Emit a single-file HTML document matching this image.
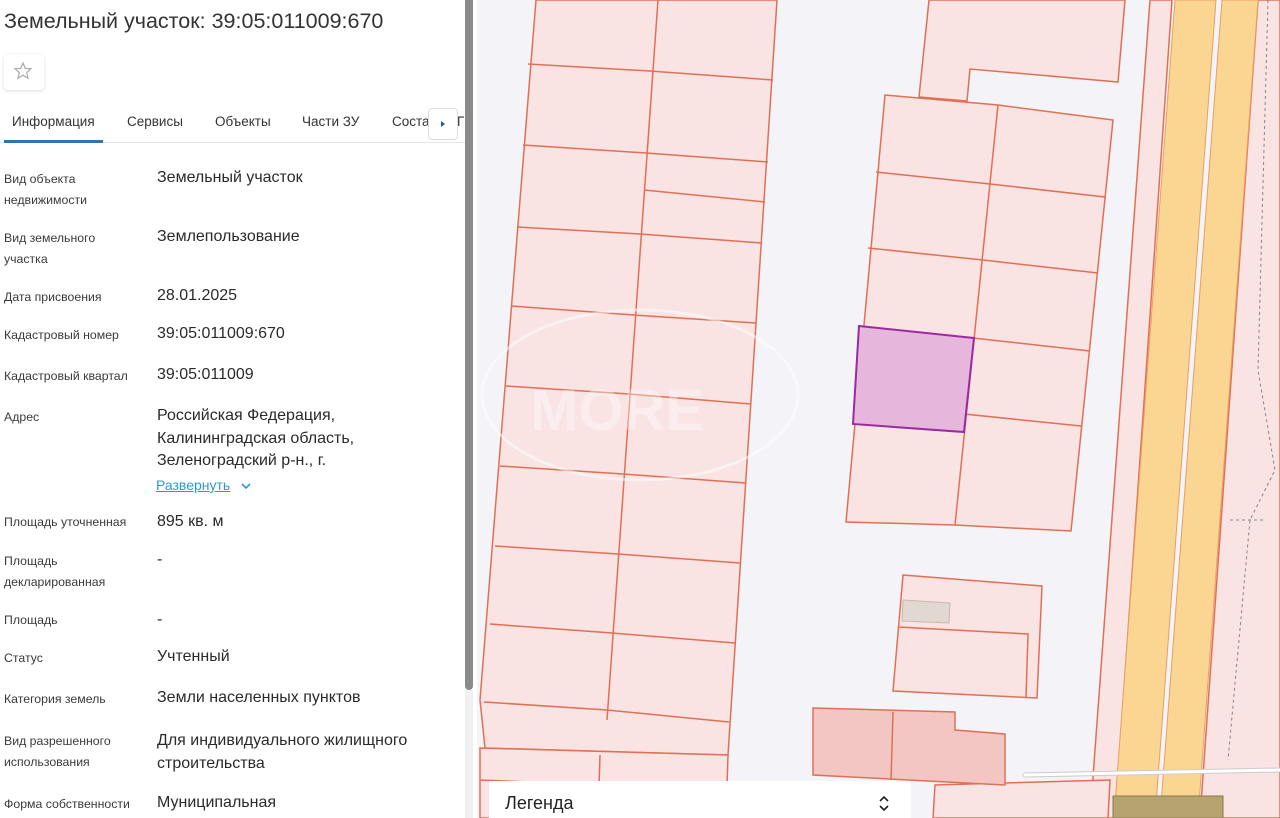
<!DOCTYPE html>
<html><head><meta charset="utf-8">
<style>
*{margin:0;padding:0;box-sizing:border-box}
body{width:1280px;height:818px;overflow:hidden;position:relative;background:#f4f4f8;font-family:"Liberation Sans",sans-serif}
#map{position:absolute;left:0;top:0}
#panel{position:absolute;left:0;top:0;width:477px;height:818px;background:#fff}
.t{position:absolute;white-space:nowrap}
.lb{position:absolute;left:4px;font-size:12.3px;color:#3a3a3a;line-height:21px}
.v{position:absolute;left:157px;font-size:16px;color:#2a2a2a;line-height:22.5px;white-space:nowrap}
.tab{position:absolute;top:114px;font-size:13.5px;color:#333}
</style></head><body>
<svg id="map" width="1280" height="818" viewBox="0 0 1280 818">
<rect x="0" y="0" width="1280" height="818" fill="#f3f3f8"/>
<g fill="#f9e3e3" stroke="#e07055" stroke-width="1.5">
<polygon points="536,0 777,0 728,755 485,748 480,700"/>
<polygon points="480,748 728,755 726,818 480,818"/>
<line x1="658" y1="0" x2="607" y2="720"/>
<line x1="600" y1="755" x2="598" y2="818"/>
<line x1="528" y1="64" x2="650" y2="71"/><line x1="650" y1="71" x2="773" y2="80"/>
<line x1="523" y1="145" x2="646" y2="153"/><line x1="646" y1="153" x2="768" y2="162"/>
<line x1="644" y1="190" x2="765" y2="202"/>
<line x1="517" y1="227" x2="640" y2="234"/><line x1="640" y1="234" x2="762" y2="243"/>
<line x1="511" y1="306" x2="634" y2="315"/><line x1="634" y1="315" x2="756" y2="323"/>
<line x1="506" y1="386" x2="629" y2="394"/><line x1="629" y1="394" x2="751" y2="404"/>
<line x1="500" y1="466" x2="623" y2="474"/><line x1="623" y1="474" x2="746" y2="483"/>
<line x1="495" y1="546" x2="618" y2="554"/><line x1="618" y1="554" x2="740" y2="563"/>
<line x1="490" y1="624" x2="612" y2="633"/><line x1="612" y1="633" x2="735" y2="643"/>
<line x1="484" y1="702" x2="607" y2="710"/><line x1="607" y1="710" x2="729" y2="722"/>
<line x1="480" y1="780" x2="728" y2="790"/>
<polygon points="929,0 1125,0 1118,82 970,69 967,101 919,97"/>
<polygon points="885,95 998,105 1113,120 1071,531 955,525 846,522"/>
<line x1="998" y1="105" x2="955" y2="525"/>
<line x1="876" y1="172" x2="990" y2="184"/><line x1="990" y1="184" x2="1105" y2="197"/>
<line x1="868" y1="248" x2="983" y2="260"/><line x1="983" y1="260" x2="1098" y2="273"/>
<line x1="973" y1="338" x2="1090" y2="351"/>
<line x1="853" y1="423" x2="964" y2="432"/><line x1="964" y1="414" x2="1081" y2="426"/>
<polygon points="903,575 1042,586 1037,698 893,691"/>
<polyline fill="none" points="898,627 1028,634 1026,697"/>
<polygon points="1150,0 1172,0 1115,818 1090,818"/>
<polygon points="1258,0 1280,0 1280,818 1200,818"/>
<polygon points="935,785 1110,780 1108,818 933,818"/>
</g>
<polygon points="903,600 950,603 949,623 902,621" fill="#e2d8d2" stroke="#c8b8b0"/>
<polygon points="813,708 955,712 955,730 1005,734 1005,785 813,775" fill="#f3c6c3" stroke="#e07055" stroke-width="1.5"/>
<line x1="893" y1="712" x2="891" y2="780" stroke="#e07055" stroke-width="1.5"/>
<polygon points="1175,0 1216,0 1155,818 1114,818" fill="#fbd592" stroke="#e8a060"/>
<polygon points="1222,0 1258,0 1198,818 1160,818" fill="#fbd592" stroke="#e8a060"/>
<polyline points="1268,0 1258,370 1275,470 1250,520 1228,760" fill="none" stroke="#888" stroke-dasharray="3,3"/>
<line x1="1230" y1="520" x2="1265" y2="520" stroke="#888" stroke-dasharray="3,3"/>
<line x1="1025" y1="775" x2="1280" y2="770" stroke="#ccc" stroke-width="5" stroke-linecap="round"/>
<line x1="1025" y1="775" x2="1280" y2="770" stroke="#fff" stroke-width="3" stroke-linecap="round"/>
<polygon points="859,326 974,338 964,432 853,424" fill="#e6b6dc" stroke="#9a2aa0" stroke-width="2"/>
<rect x="1113" y="796" width="110" height="22" fill="#b5a46f" stroke="#8a7a4a"/>
<ellipse cx="640" cy="395" rx="158" ry="85" fill="none" stroke="#fff" stroke-opacity="0.5" stroke-width="3"/>
<text x="530" y="430" font-family="Liberation Sans" font-size="58" font-weight="bold" fill="#fff" fill-opacity="0.35">MORE</text>
<rect x="489" y="781" width="422" height="40" fill="#fff"/>
<text x="505" y="809" font-family="Liberation Sans" font-size="18" fill="#222">Легенда</text>
<path d="M880 801 l4 -4 l4 4 M880 806 l4 4 l4 -4" fill="none" stroke="#222" stroke-width="1.6"/>
</svg>
<div id="panel">
<div class="t" style="left:4px;top:9px;font-size:21.5px;color:#333">Земельный участок: 39:05:011009:670</div>
<div style="position:absolute;left:4px;top:54px;width:40px;height:36px;border-radius:4px;box-shadow:0 1px 3px rgba(0,0,0,.15);background:#fff"></div>
<svg style="position:absolute;left:13px;top:61px" width="20" height="20" viewBox="0 0 20 20"><path d="M10 2 L12.3 7.4 18 7.8 13.7 11.5 15 17.2 10 14.2 5 17.2 6.3 11.5 2 7.8 7.7 7.4Z" fill="none" stroke="#aaa" stroke-width="1.2"/></svg>
<div class="tab" style="left:12px">Информация</div>
<div class="tab" style="left:127px">Сервисы</div>
<div class="tab" style="left:215px">Объекты</div>
<div class="tab" style="left:302px">Части ЗУ</div>
<div class="tab" style="left:392px">Соста</div>
<div class="tab" style="left:457px">Г</div>
<div style="position:absolute;left:428px;top:108px;width:30px;height:32px;background:#fff;border:1px solid #ddd;border-radius:4px"></div>
<div style="position:absolute;left:441px;top:121px;width:0;height:0;border-left:4px solid #1a5fa8;border-top:3.5px solid transparent;border-bottom:3.5px solid transparent"></div>
<div style="position:absolute;left:0;top:142px;width:465px;height:1px;background:#e6e6e6"></div>
<div style="position:absolute;left:4px;top:140px;width:99px;height:3px;background:#2e73b8"></div>

<div class="lb" style="top:169px">Вид объекта<br>недвижимости</div><div class="v" style="top:167px">Земельный участок</div>
<div class="lb" style="top:228px">Вид земельного<br>участка</div><div class="v" style="top:226px">Землепользование</div>
<div class="lb" style="top:287px">Дата присвоения</div><div class="v" style="top:285px">28.01.2025</div>
<div class="lb" style="top:325px">Кадастровый номер</div><div class="v" style="top:323px">39:05:011009:670</div>
<div class="lb" style="top:366px">Кадастровый квартал</div><div class="v" style="top:364px">39:05:011009</div>
<div class="lb" style="top:407px">Адрес</div><div class="v" style="top:405px">Российская Федерация,<br>Калининградская область,<br>Зеленоградский р-н., г.</div>
<div class="t" style="left:156px;top:477px;font-size:14px;color:#2a9bd0;text-decoration:underline">Развернуть</div>
<svg style="position:absolute;left:240px;top:481px" width="12" height="10"><path d="M2 3 L6 7 L10 3" fill="none" stroke="#2a9bd0" stroke-width="1.6"/></svg>
<div class="lb" style="top:512px">Площадь уточненная</div><div class="v" style="top:511px">895 кв. м</div>
<div class="lb" style="top:551px">Площадь<br>декларированная</div><div class="v" style="top:549px">-</div>
<div class="lb" style="top:610px">Площадь</div><div class="v" style="top:609px">-</div>
<div class="lb" style="top:648px">Статус</div><div class="v" style="top:646px">Учтенный</div>
<div class="lb" style="top:689px">Категория земель</div><div class="v" style="top:687px">Земли населенных пунктов</div>
<div class="lb" style="top:731px">Вид разрешенного<br>использования</div><div class="v" style="top:730px">Для индивидуального жилищного<br>строительства</div>
<div class="lb" style="top:794px">Форма собственности</div><div class="v" style="top:792px">Муниципальная</div>
<div style="position:absolute;left:465px;top:0;width:8px;height:690px;background:#8a8a8a;border-radius:0 0 4px 4px"></div>
<div style="position:absolute;left:465px;top:690px;width:8px;height:128px;background:#f0f0f0"></div>
</div>
</body></html>
